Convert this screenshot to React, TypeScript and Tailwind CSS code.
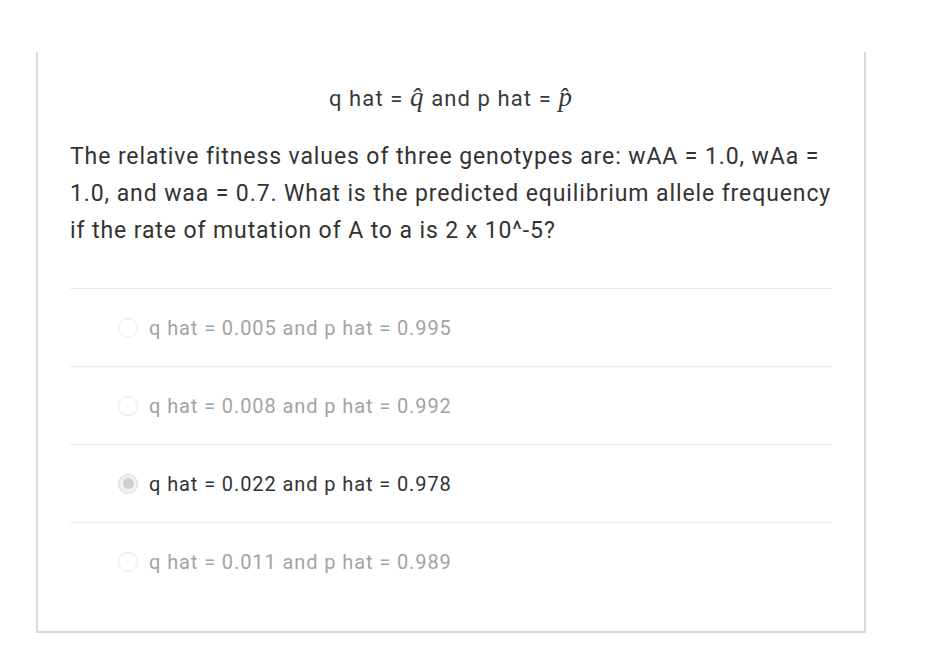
export default function App() {
  const options = [
    { label: "q hat = 0.005 and p hat = 0.995", selected: false },
    { label: "q hat = 0.008 and p hat = 0.992", selected: false },
    { label: "q hat = 0.022 and p hat = 0.978", selected: true },
    { label: "q hat = 0.011 and p hat = 0.989", selected: false },
  ];

  return (
    <div className="min-h-screen bg-white pt-[52px] pl-[36px]" style={{ fontFamily: "Roboto, 'Liberation Sans', sans-serif" }}>
      <div className="w-[830px] border-x-2 border-b-2 border-[#dadada] px-[32px] pb-[31px]">
        <p className="pt-[30px] text-center text-[22px] leading-[30px] tracking-[1.1px] text-[#3a3a3a]">
          q hat = <span className="text-[27px] leading-[30px] italic" style={{ fontFamily: "'Liberation Serif', serif" }}>q&#770;</span> and p hat ={" "}
          <span className="text-[27px] leading-[30px] italic" style={{ fontFamily: "'Liberation Serif', serif" }}>p&#770;</span>
        </p>
        <p className="mt-[24px] text-[23px] leading-[37px] tracking-[0.9px] text-[#333333]">
          The relative fitness values of three genotypes are: wAA = 1.0, wAa = 1.0, and waa = 0.7. What is the predicted equilibrium allele frequency if the rate of mutation of A to a is 2 x 10^-5?
        </p>
        <div className="mt-[39px]">
          {options.map((o) => (
            <div key={o.label} className="flex h-[78px] items-center border-t border-[#ececec] pl-[48px]">
              <span
                className={`flex h-[20px] w-[20px] items-center justify-center rounded-full border ${o.selected ? "border-[#d6d6d6] bg-[#f2f2f2]" : "border-[#e4e4e4]"}`}
              >
                {o.selected ? <span className="h-[11px] w-[11px] rounded-full bg-[#cfcfcf]" /> : null}
              </span>
              <span className={`ml-[11px] text-[20px] tracking-[0.9px] ${o.selected ? "text-[#333333]" : "text-[#a3a3a3]"}`}>{o.label}</span>
            </div>
          ))}
        </div>
      </div>
    </div>
  );
}
